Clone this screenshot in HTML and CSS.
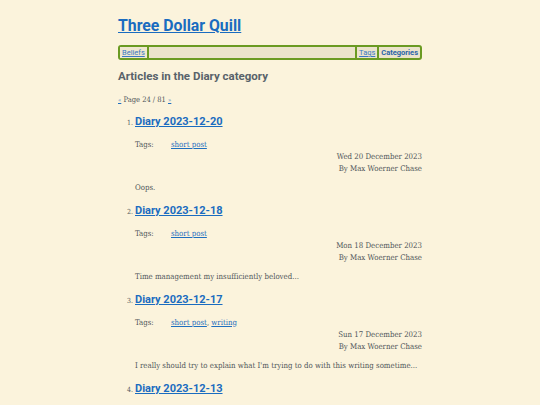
FILE: index.html
```
<!DOCTYPE html>
<html>
<head>
<meta charset="utf-8">
<link rel="stylesheet" href="styles.css">
</head>
<body>
<div class="page">
  <header class="masthead"><a href="#" class="site-title">Three Dollar Quill</a></header>
  <nav class="nav">
    <a href="#" class="nav-link first">Beliefs</a>
    <span class="nav-fill"></span>
    <a href="#" class="nav-link">Tags</a>
    <a href="#" class="nav-link current">Categories</a>
  </nav>
  <h2 class="cat-heading">Articles in the Diary category</h2>
  <p class="pager"><a href="#">«</a> Page 24 / 81 <a href="#">»</a></p>
  <ol class="articles" start="1">
    <li class="article">
      <h3 class="art-title"><a href="#">Diary 2023-12-20</a></h3>
      <div class="tags"><span class="tags-label">Tags:</span><a href="#">short post</a></div>
      <div class="meta"><div>Wed 20 December 2023</div><div>By Max Woerner Chase</div></div>
      <p class="summary">Oops.</p>
    </li>
    <li class="article">
      <h3 class="art-title"><a href="#">Diary 2023-12-18</a></h3>
      <div class="tags"><span class="tags-label">Tags:</span><a href="#">short post</a></div>
      <div class="meta"><div>Mon 18 December 2023</div><div>By Max Woerner Chase</div></div>
      <p class="summary">Time management my insufficiently beloved...</p>
    </li>
    <li class="article">
      <h3 class="art-title"><a href="#">Diary 2023-12-17</a></h3>
      <div class="tags"><span class="tags-label">Tags:</span><a href="#">short post</a>, <a href="#">writing</a></div>
      <div class="meta"><div>Sun 17 December 2023</div><div>By Max Woerner Chase</div></div>
      <p class="summary">I really should try to explain what I'm trying to do with this writing sometime...</p>
    </li>
    <li class="article">
      <h3 class="art-title"><a href="#">Diary 2023-12-13</a></h3>
      <div class="tags"><span class="tags-label">Tags:</span><a href="#">short post</a></div>
      <div class="meta"><div>Wed 13 December 2023</div><div>By Max Woerner Chase</div></div>
      <p class="summary">...</p>
    </li>
  </ol>
</div>
</body>
</html>
```
FILE: styles.css
```
html, body {
  margin: 0;
  padding: 0;
  background: #fbf3dc;
}
body {
  font-family: "DejaVu Serif", serif;
  font-stretch: semi-condensed;
  color: #50565a;
  font-size: 7.8px;
}
a { color: #1f6fbf; }
.page {
  width: 304px;
  margin: 0 auto;
  padding-top: 16px;
}
.masthead {
  line-height: 20px;
  height: 20px;
}
.site-title {
  font-family: Roboto, sans-serif;
  font-stretch: normal;
  font-weight: 700;
  font-size: 15.8px;
  color: #1a6cc0;
}
.nav {
  margin-top: 9px;
  display: flex;
  align-items: stretch;
  height: 11px;
  border: 2px solid #6a9a22;
  border-radius: 3px;
  background: #ebe3cb;
  font-family: Roboto, sans-serif;
  font-stretch: normal;
  font-size: 7.5px;
  line-height: 11px;
}
.nav-link {
  padding: 0 2px;
  border-left: 2px solid #6a9a22;
  color: #3a78c2;
}
.nav-link.first {
  border-left: none;
  border-right: 2px solid #6a9a22;
  background: #efe7cf;
}
.nav-fill { flex: 1; }
.nav-link.current {
  font-weight: 700;
  color: #2a64a8;
  text-decoration: none;
}
.cat-heading {
  margin: 9px 0 0;
  font-family: Roboto, sans-serif;
  font-stretch: normal;
  font-weight: 700;
  font-size: 11.5px;
  line-height: 15px;
  color: #58626a;
}
.pager {
  margin: 10px 0 0;
  line-height: 12px;
  font-size: 7.5px;
}
.pager a { font-size: 6px; }
.articles {
  margin: 7.5px 0 0;
  padding-left: 17px;
  list-style: decimal;
}
.article::marker {
  font-size: 7px;
  color: #555a5e;
}
.art-title {
  margin: 0;
  line-height: 16px;
  font-family: Roboto, sans-serif;
  font-stretch: normal;
  font-weight: 700;
  font-size: 11px;
}
.art-title a { color: #1a6cc0; }
.tags {
  margin-top: 9px;
  line-height: 12px;
  white-space: nowrap;
}
.tags-label {
  display: inline-block;
  width: 36px;
}
.meta {
  text-align: right;
  line-height: 12px;
}
.summary {
  margin: 7px 0 9px;
  line-height: 12px;
  white-space: nowrap;
}
```
